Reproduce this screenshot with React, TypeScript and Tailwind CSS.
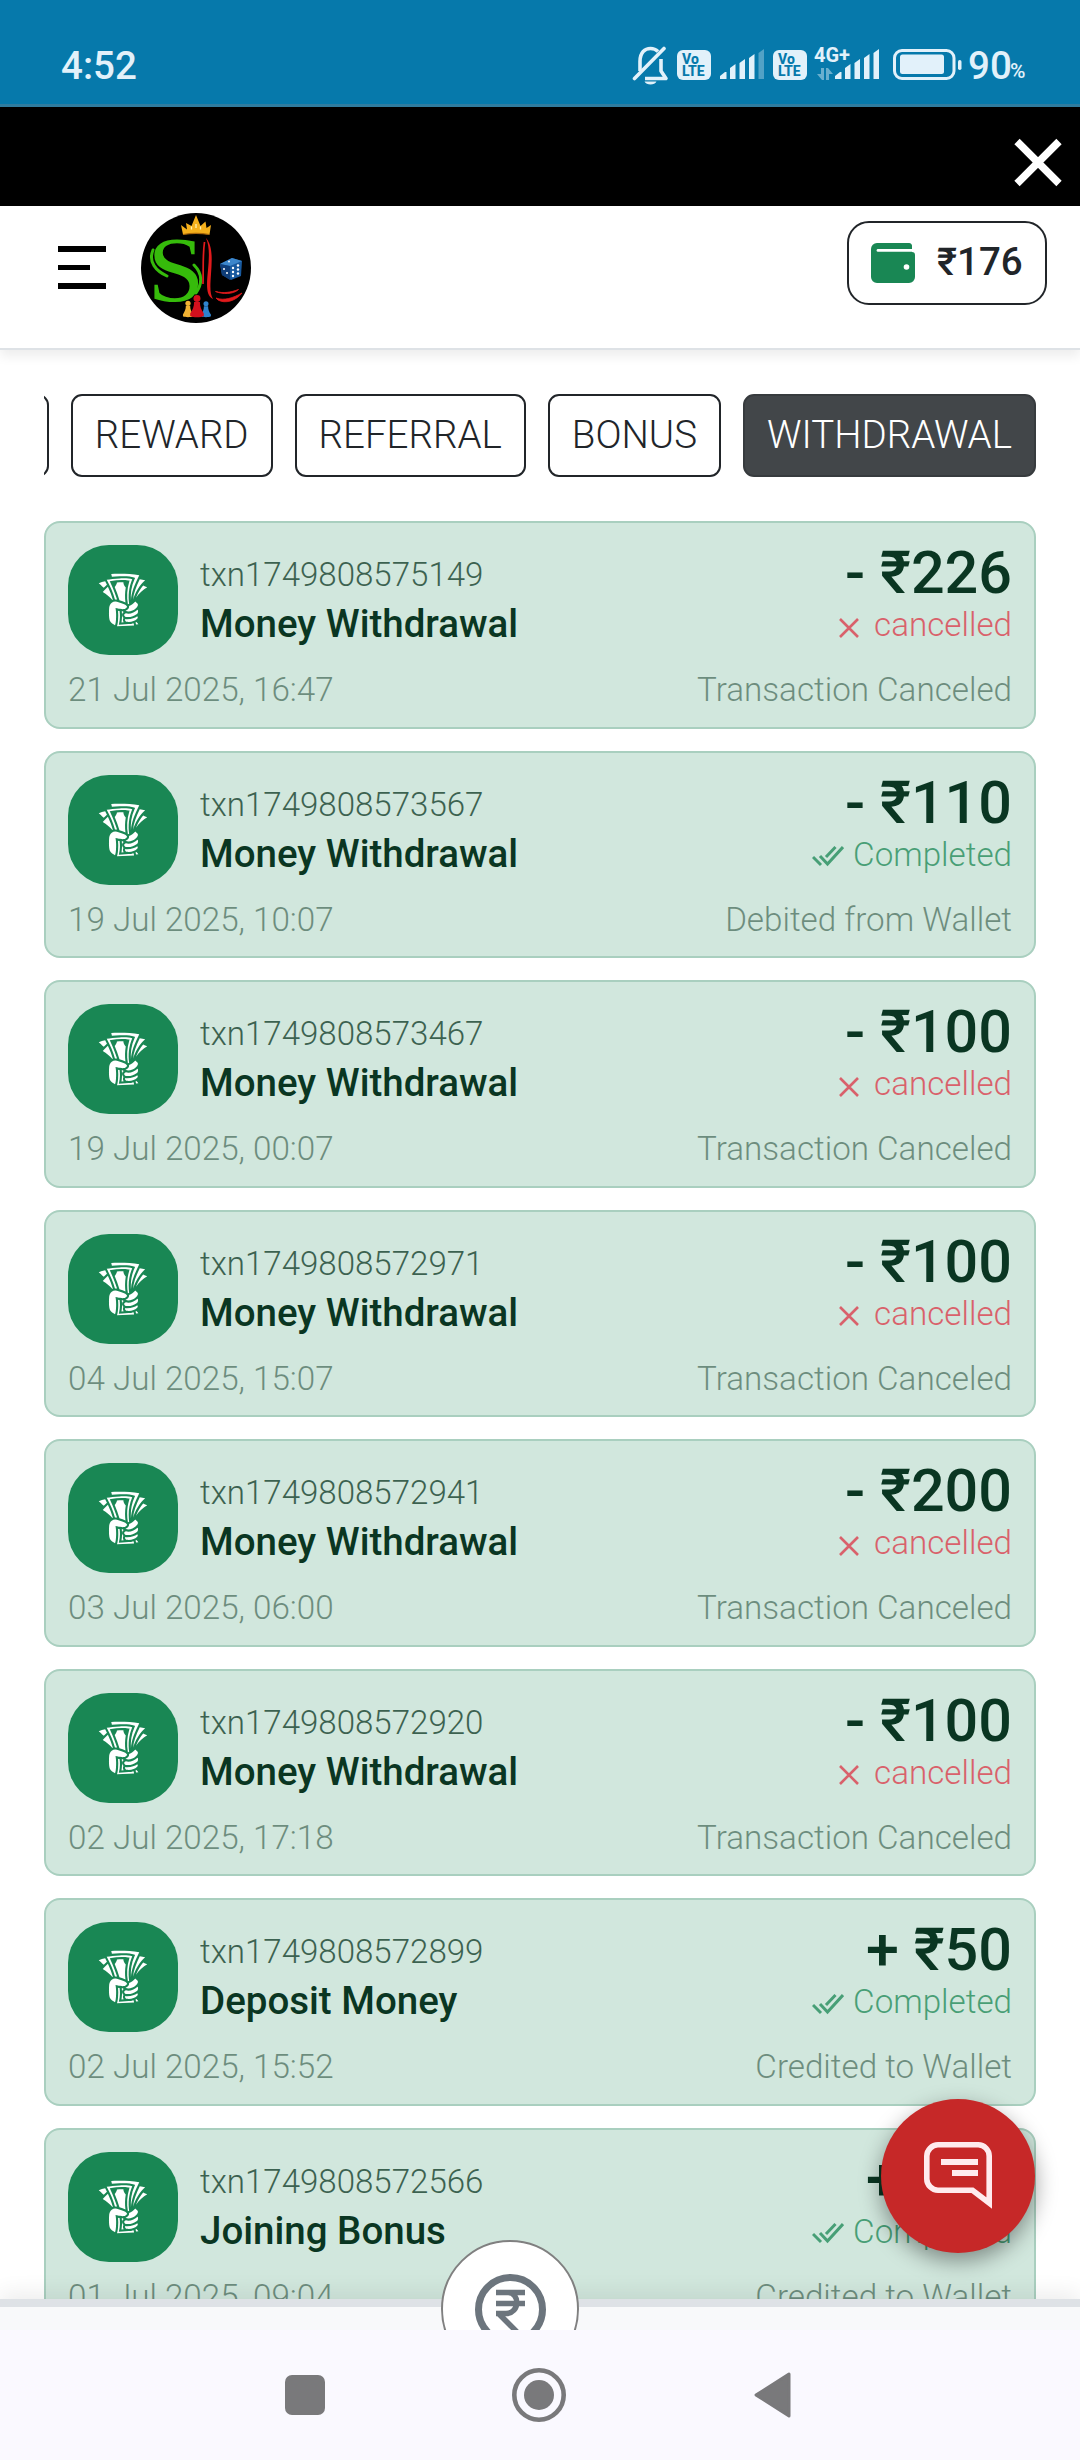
import { GiTakeMyMoney } from "react-icons/gi";

type Txn = {
  id: string;
  title: string;
  date: string;
  amount: string;
  ok: boolean;
  note: string;
};

const CANCELED = "Transaction Canceled";

const transactions: Txn[] = [
  { id: "txn1749808575149", title: "Money Withdrawal", date: "21 Jul 2025, 16:47", amount: "- ₹226", ok: false, note: CANCELED },
  { id: "txn1749808573567", title: "Money Withdrawal", date: "19 Jul 2025, 10:07", amount: "- ₹110", ok: true, note: "Debited from Wallet" },
  { id: "txn1749808573467", title: "Money Withdrawal", date: "19 Jul 2025, 00:07", amount: "- ₹100", ok: false, note: CANCELED },
  { id: "txn1749808572971", title: "Money Withdrawal", date: "04 Jul 2025, 15:07", amount: "- ₹100", ok: false, note: CANCELED },
  { id: "txn1749808572941", title: "Money Withdrawal", date: "03 Jul 2025, 06:00", amount: "- ₹200", ok: false, note: CANCELED },
  { id: "txn1749808572920", title: "Money Withdrawal", date: "02 Jul 2025, 17:18", amount: "- ₹100", ok: false, note: CANCELED },
  { id: "txn1749808572899", title: "Deposit Money", date: "02 Jul 2025, 15:52", amount: "+ ₹50", ok: true, note: "Credited to Wallet" },
  { id: "txn1749808572566", title: "Joining Bonus", date: "01 Jul 2025, 09:04", amount: "+ ₹50", ok: true, note: "Credited to Wallet" },
];

function MutedBell() {
  return (
    <svg className="h-[42px] w-[37px]" viewBox="0 0 37 42" fill="none" stroke="#e2f1fa" strokeWidth="3.6" strokeLinejoin="round">
      <path d="M8 26V16.500C8 7 13 3.500 18.500 3.500c3 0 5.500 1 7.500 3M29 14v12l5 7.500H13" />
      <path d="M2.500 33.500 32 3.500" strokeLinecap="round" />
      <path d="M12.500 36.500h12c-1.500 4-10.500 4-12 0z" fill="#e2f1fa" stroke="none" />
    </svg>
  );
}

function VoLte() {
  return (
    <div className="flex h-[30px] w-[34px] flex-col justify-center rounded-[6px] bg-[#e2f1fa] pl-[5px] text-[14px] leading-[12.500px] font-extrabold text-[#0679ab]">
      <span>Vo</span>
      <span>LTE</span>
    </div>
  );
}

function Signal({ dim }: { dim: boolean }) {
  return (
    <svg className="h-[30px] w-[44px]" viewBox="0 0 44 30" fill="#e2f1fa">
      <path d="M0 30v-3l5-4h1.500v7zM10 30V19l5.500-4v15zM19.500 30V14l5.500-4v20zM29 30V9l5.500-4v25z" />
      <path d="M38.500 30V4L44 0v30z" opacity={dim ? 0.35 : 1} />
    </svg>
  );
}

function StatusBar() {
  return (
    <div className="flex h-[107px] shrink-0 items-start justify-between border-b-[3px] border-[#2f7c9f] bg-[#0679ab] pr-[53px] pl-[61px] text-[#e2f1fa]">
      <span className="mt-[42px] text-[38.500px] leading-[48px] font-medium">4:52</span>
      <div className="flex items-start">
        <div className="mt-[45px]"><MutedBell /></div>
        <div className="mt-[50px] ml-[8px]"><VoLte /></div>
        <div className="mt-[49px] ml-[9px]"><Signal dim /></div>
        <div className="mt-[50px] ml-[9px]"><VoLte /></div>
        <div className="relative mt-[49px] ml-[28px]">
          <Signal dim={false} />
          <span className="absolute -top-[5px] -left-[21px] text-[20px] leading-[22px] font-bold">4G+</span>
          <svg className="absolute top-[19px] -left-[18px] h-[12px] w-[16px]" viewBox="0 0 16 12" fill="#e2f1fa" opacity="0.45">
            <path d="M4 0h3v12H5L0 6h4zM9 0h2l5 6h-4v6H9z" />
          </svg>
        </div>
        <svg className="mt-[49px] ml-[14px] h-[31px] w-[69px]" viewBox="0 0 69 31">
          <rect x="1.500" y="1.500" width="59.500" height="28" rx="7.500" fill="none" stroke="#e2f1fa" strokeWidth="3" />
          <rect x="7" y="5.500" width="44" height="19.500" rx="2.500" fill="#e2f1fa" />
          <rect x="65" y="11" width="3.500" height="10" rx="1.700" fill="#e2f1fa" />
        </svg>
        <span className="mt-[42px] ml-[6px] w-[42px] text-[38.500px] leading-[48px] font-medium">90</span>
        <span className="mt-[57px] w-[17px] text-[21px] leading-[28px] font-medium">%</span>
      </div>
    </div>
  );
}

function Pawn({ x, s, fill }: { x: number; s: number; fill: string }) {
  return (
    <g transform={`translate(${x} 104) scale(${s})`} fill={fill}>
      <circle cx="0" cy="-19" r="3.600" />
      <path d="M-3-15.500h6c0 5 1.500 8 4 12v2.500c-3 1.700-11 1.700-14 0v-2.500c2.500-4 4-7 4-12z" />
    </g>
  );
}

function Logo() {
  return (
    <svg className="h-[110px] w-[110px]" viewBox="0 0 110 110">
      <circle cx="55" cy="55" r="55" fill="#000" />
      <path d="M42 21.500 40 12l6 4.500-1-6.500 5.500 3L55 2l4.500 11 5-4.500 1 6.500 4.500-3-1.500 9.500c-8-1.500-18-1.500-26.500 0z" fill="#f5b01c" />
      <path d="M50.500 13.500v3M55 11v4M59.500 13.500v3" stroke="#fff0b0" strokeWidth="1.300" />
      <path d="M42 21.500c8-1.500 18-1.500 26.500 0" stroke="#a8660a" strokeWidth="1.200" fill="none" />
      <text x="0" y="0" transform="translate(6.500 87.500) scale(1.100 1)" fontFamily="Liberation Serif" fontSize="93" fill="#36bb0b">S</text>
      <path d="M12 37c-5 12 3 21 14 26M53 52c9 9 8 19 2 28" stroke="#36bb0b" strokeWidth="3" fill="none" strokeLinecap="round" />
      <path d="M65 25c7 8 6 22 5 36s-1 20 2 25c-8-3-6-18-5-29s2-23-2-32z" fill="#e21a1c" />
      <path d="M63.500 29c-2 14-1 28-1.500 42" stroke="#e21a1c" strokeWidth="1.700" fill="none" />
      <path d="M74.500 78.500c8 2 15 1 23-2-5 5-16 5-23 2zM75 85c8 3 17 0 26-5-6 8-17 11-24 7z" stroke="#e21a1c" strokeWidth="0.800" fill="#e21a1c" />
      <path d="m79 51 12-6 10 3-1 15-10 4-9-5z" fill="#195a9f" />
      <path d="m79 51 12-6 10 3-12 5z" fill="#3c86cb" />
      <path d="m79 51 10 2v14l-8-5z" fill="#0f3d78" />
      <g fill="#fff">
        <circle cx="92" cy="55" r="1.200" /><circle cx="92" cy="59" r="1.200" /><circle cx="92" cy="63" r="1.200" />
        <circle cx="97" cy="52.500" r="1.200" /><circle cx="97" cy="56.500" r="1.200" /><circle cx="97" cy="60.500" r="1.200" />
        <circle cx="83" cy="56" r="1" /><circle cx="86" cy="60" r="1" /><circle cx="88" cy="48.500" r="0.900" />
      </g>
      <Pawn x={47} s={0.72} fill="#f2b233" />
      <Pawn x={65} s={0.7} fill="#2f84cf" />
      <Pawn x={56} s={0.97} fill="#d3101d" />
    </svg>
  );
}

function Header() {
  return (
    <header className="relative z-10 flex h-[144px] shrink-0 items-start justify-between border-b-2 border-[#dee2e6] bg-white pr-[33px] pl-[58px] shadow-[0_6px_11px_rgba(0,0,0,0.075)]">
      <div className="flex items-start">
        <div className="mt-10 flex w-12 flex-col gap-[13px]">
          <span className="h-[5.500px] w-12 bg-black" />
          <span className="h-[5.500px] w-8 bg-black" />
          <span className="h-[5.500px] w-12 bg-black" />
        </div>
        <div className="mt-[7px] ml-[35px]"><Logo /></div>
      </div>
      <div className="mt-[15px] flex h-[84px] w-[200px] items-center rounded-[22px] border-2 border-[#212529] pl-[22px]">
        <svg className="h-10 w-[44px]" viewBox="0 0 44 40">
          <path d="M6 0h32a3 3 0 0 1 3 3.500V9a3 3 0 0 1 3 3v22a6 6 0 0 1-6 6H6a6 6 0 0 1-6-6V6a6 6 0 0 1 6-6z" fill="#198754" />
          <path d="M7 7.400h35" stroke="#fff" strokeWidth="2.800" strokeLinecap="round" />
          <path d="M41 4v5h3V4z" fill="#fff" />
          <circle cx="35.500" cy="24" r="2.800" fill="#fff" />
        </svg>
        <span className="-mt-[2px] ml-[22px] text-[38.500px] leading-[58px] font-medium text-[#212529]">₹176</span>
      </div>
    </header>
  );
}

function Tab({ label, active }: { label: string; active?: boolean }) {
  return (
    <div
      className={
        active
          ? "flex h-[83px] shrink-0 items-center rounded-[11px] border-2 border-[#373b3e] bg-[#424649] px-[22px] text-white"
          : "flex h-[83px] shrink-0 items-center rounded-[11px] border-2 border-[#212529] px-[22px] text-[#212529]"
      }
    >
      <span className="-mt-[2px] text-[38.500px] leading-[58px] font-light">{label}</span>
    </div>
  );
}

function Card({ t }: { t: Txn }) {
  return (
    <div className="flex h-[207.500px] shrink-0 flex-col rounded-[16px] border-2 border-[#a9cfbf] bg-[#d1e7dd] px-[22px] pt-[22px]">
      <div className="flex h-[110px]">
        <div className="flex h-[110px] w-[110px] items-center justify-center rounded-[41px] bg-[#198754] text-white">
          <GiTakeMyMoney className="h-[60px] w-[60px]" />
        </div>
        <div className="ml-[22px] flex flex-col pt-[5px] text-[#0a3622]">
          <span className="text-[33.100px] leading-[49px] font-light opacity-75">{t.id}</span>
          <span className="text-[38.500px] leading-[50px] font-medium">{t.title}</span>
        </div>
        <div className="ml-auto flex flex-col items-end text-[#0a3622]">
          <span className="-mt-1 text-[59.300px] leading-[63px] font-medium">{t.amount}</span>
          <span className={t.ok ? "-mt-[1px] flex items-center text-[#198754] opacity-75" : "-mt-[1px] flex items-center text-[#dc3545] opacity-75"}>
            {t.ok ? (
              <svg className="mt-[3px] mr-[9px] h-[22px] w-[32px]" viewBox="0 0 32 22" fill="none" stroke="currentColor" strokeWidth="3">
                <path d="m1 12 8 8M8 11l7.500 8L31 2M14 12 23.500 2" />
              </svg>
            ) : (
              <svg className="mt-[5px] mr-[15px] h-5 w-5" viewBox="0 0 20 20" fill="none" stroke="currentColor" strokeWidth="2.600">
                <path d="m1 1 18 18M19 1 1 19" />
              </svg>
            )}
            <span className="text-[33.200px] leading-[44px] font-light">{t.ok ? "Completed" : "cancelled"}</span>
          </span>
        </div>
      </div>
      <div className="mt-[10px] flex justify-between text-[33.200px] leading-[50px] font-light text-[#0a3622] opacity-50">
        <span>{t.date}</span>
        <span>{t.note}</span>
      </div>
    </div>
  );
}

export default function App() {
  return (
    <div className="relative flex h-[2460px] w-[1080px] flex-col overflow-hidden bg-white font-['Roboto',sans-serif]">
      <StatusBar />
      <div className="flex h-[99px] shrink-0 justify-end bg-black pt-[31px] pr-[17px]">
        <svg className="h-[49px] w-[50px]" viewBox="0 0 50 49" stroke="#fff" strokeWidth="7.500">
          <path d="m4 3.500 42 42M46 3.500l-42 42" />
        </svg>
      </div>
      <Header />
      <main className="flex h-[1949px] shrink-0 flex-col overflow-hidden px-11">
        <div className="mt-11 flex shrink-0 justify-end gap-[22px] overflow-hidden">
          <Tab label="" />
          <Tab label="REWARD" />
          <Tab label="REFERRAL" />
          <Tab label="BONUS" />
          <Tab label="WITHDRAWAL" active />
        </div>
        <div className="mt-[44.300px] flex shrink-0 flex-col gap-[22px]">
          {transactions.map((t) => (
            <Card key={t.id} t={t} />
          ))}
        </div>
      </main>
      <div className="relative h-[31px] shrink-0 border-t-8 border-[#dee2e6] bg-[#f8f9fa] shadow-[0_-6px_22px_rgba(0,0,0,0.075)]">
        <div className="absolute -top-[67px] left-[441px] h-[90px] w-[138px] overflow-hidden">
          <div className="flex h-[138px] w-[138px] items-center justify-center rounded-full border-2 border-[#808080] bg-white">
            <svg className="h-[71px] w-[71px]" viewBox="0 0 71 71" fill="none" stroke="#6c757d">
              <circle cx="35.500" cy="35.500" r="32" strokeWidth="7" />
              <path d="M21 18.500h29M21 29.500h29M33 18.500c12 0 12 21-2 21H21M24 40l20 20" strokeWidth="5.500" />
            </svg>
          </div>
        </div>
      </div>
      <div className="relative flex h-[130px] shrink-0 bg-[#faf9ff]">
        <svg className="mt-[45px] ml-[285px] h-10 w-10" viewBox="0 0 40 40"><rect width="40" height="40" rx="7" fill="#79797b" /></svg>
        <svg className="mt-[38px] ml-[187px] h-[54px] w-[54px]" viewBox="0 0 54 54">
          <circle cx="27" cy="27" r="24.700" fill="none" stroke="#79797b" strokeWidth="4.600" />
          <circle cx="27" cy="27" r="15" fill="#79797b" />
        </svg>
        <svg className="mt-[42px] ml-[188px] h-[46px] w-[37px]" viewBox="0 0 37 46"><path d="M2 23 35 2v42z" fill="#79797b" stroke="#79797b" strokeWidth="3" strokeLinejoin="round" /></svg>
      </div>
      <div className="absolute top-[2099px] left-[881px] z-20 flex h-[154px] w-[154px] items-center justify-center rounded-full bg-[#c62828] shadow-[0_8px_22px_rgba(0,0,0,0.400)]">
        <svg className="h-[68px] w-[68px]" viewBox="0 0 68 68" fill="none" stroke="#ffebee">
          <path d="M65.200 61V14c0-6-5-11.200-11-11.200H14C8 2.800 2.800 8 2.800 14v23c0 6 5.200 11.200 11.200 11.200h34.500z" strokeWidth="5.600" />
          <path d="M17 20h37M28 31h26" strokeWidth="5.800" />
        </svg>
      </div>
    </div>
  );
}
